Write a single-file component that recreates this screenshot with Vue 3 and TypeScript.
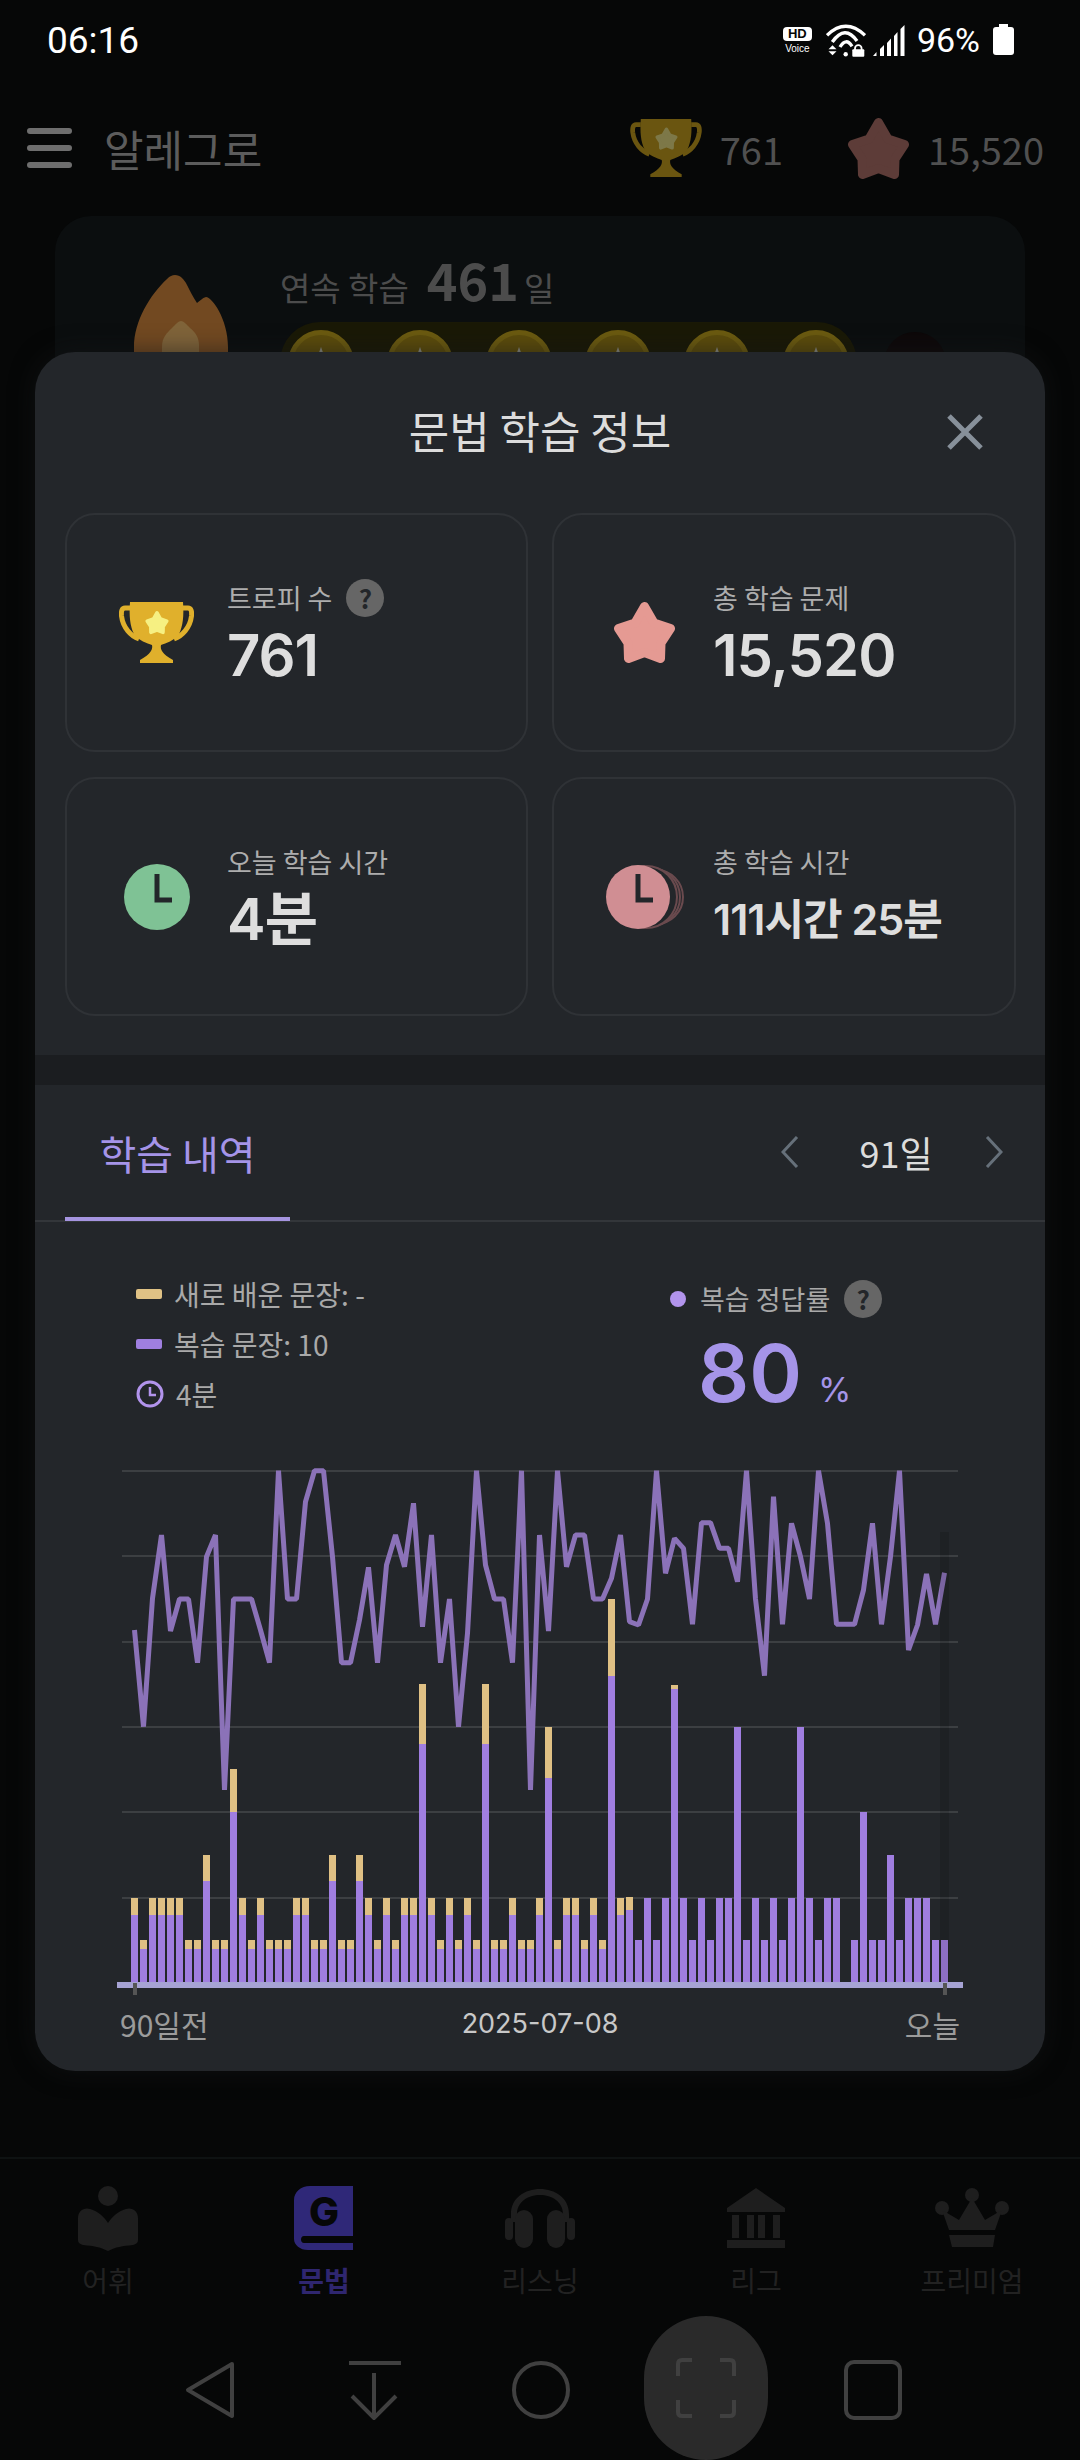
<template>
  <div class="screen">
    <div class="status">
      <span class="clock">06:16</span>
      <div class="status-right">
        <div class="hd"><b>HD</b><span>Voice</span></div>
        <svg class="wifi" width="40" height="33" viewBox="0 0 40 33" fill="none" stroke="#fff" stroke-width="3.4">
          <path d="M1 11.300Q19.700 -6.700 39 11.300" />
          <path d="M6.300 18Q19 0 31 17" />
          <path d="M14 23Q20 13 26 22.300" />
          <circle cx="19.700" cy="30.300" r="2.200" fill="#fff" stroke="none" />
          <path d="M6.500 21.300l-4 4h8zM6.500 31.300l-4-4h8z" fill="#fff" stroke="none" />
          <rect x="26.300" y="25.300" width="12" height="7.500" rx="1" fill="#fff" stroke="none" />
          <path d="M29 26v-1.500a3.300 3.300 0 0 1 6.600 0v1.500" stroke-width="1.800" />
        </svg>
        <svg class="signal" width="32" height="31" viewBox="0 0 32 31" fill="#fff">
          <path d="M0 31L3.500 27V31ZM7 24L11 20V31H7ZM14 18L18 13.500V31H14ZM21 11L24.500 7V31H21ZM27.500 4L31.500 0V31H27.500Z" />
        </svg>
        <span class="pct">96%</span>
        <div class="battery"></div>
      </div>
    </div>

    <header class="app-bar">
      <div class="burger"><i></i><i></i><i></i></div>
      <span class="app-title">알레그로</span>
      <div class="app-stats">
        <svg width="72" height="58" viewBox="0 0 75 61">
          <path :d="handles" fill="none" stroke="#6a5510" stroke-width="5" />
          <path :d="cup" fill="#6a5510" />
          <path :d="star" transform="translate(26 9) scale(.38)" fill="#7d7848" stroke="#7d7848" stroke-width="9" stroke-linejoin="round" />
        </svg>
        <span class="stat-num trophy-num">761</span>
        <svg width="63" height="61" viewBox="0 0 63 61">
          <path :d="star" fill="#5d3c38" stroke="#5d3c38" stroke-width="9" stroke-linejoin="round" />
        </svg>
        <span class="stat-num">15,520</span>
      </div>
    </header>

    <section class="streak">
      <svg class="flame" width="94" height="100" viewBox="0 0 94 100">
        <path d="M41 0C46 0 50 4 53 10C56 16 59 22 63 28C66 26 68 23 72 22C78 22 94 44 94 72V100H0V72C0 46 16 20 33 4C36 1 38 0 41 0Z" fill="#724921" />
        <path d="M47 46C50 46 53 50 56 53C61 57 65 62 65 70V100H28V72C28 62 33 58 38 53C41 50 44 46 47 46Z" fill="#80643a" />
      </svg>
      <div class="streak-body">
        <div class="streak-line"><span>연속 학습</span><b>461</b><span class="day">일</span></div>
        <div class="coin-row">
          <div class="coins">
            <div v-for="n in 6" :key="n" class="coin"><i></i></div>
          </div>
          <div class="coin-off"></div>
        </div>
      </div>
    </section>

    <nav class="tabs">
      <div class="tab">
        <svg width="60" height="66" viewBox="0 0 60 66" fill="#1e1e1e">
          <circle cx="30" cy="11" r="10" />
          <path d="M0 33C0 26 6 22 12 24C20 26 26 32 30 38C34 32 40 26 48 24C54 22 60 26 60 33V55C60 58 58 59 55 60C44 61 38 62 30 66C22 62 16 61 5 60C2 59 0 58 0 55Z" />
        </svg>
        <span>어휘</span>
      </div>
      <div class="tab active">
        <svg width="60" height="66" viewBox="0 0 60 66">
          <path d="M16 1H59V51H10C6 51 6 58 10 58H59V65H14C6 65 0 60 0 54V15C0 7 7 1 16 1Z" fill="#2f2878" />
          <text x="30" y="41" text-anchor="middle" class="g">G</text>
        </svg>
        <span>문법</span>
      </div>
      <div class="tab">
        <svg width="70" height="60" viewBox="0 0 70 60" fill="#1e1e1e">
          <path d="M6 34V26C6 10 20 1 35 1S64 10 64 26V34H58V26C58 14 47 7 35 7S12 14 12 26V34Z" />
          <rect x="10" y="22" width="18" height="38" rx="9" />
          <rect x="42" y="22" width="18" height="38" rx="9" />
          <rect x="0" y="30" width="8" height="22" rx="4" />
          <rect x="62" y="30" width="8" height="22" rx="4" />
        </svg>
        <span>리스닝</span>
      </div>
      <div class="tab">
        <svg width="58" height="60" viewBox="0 0 58 60" fill="#1e1e1e">
          <path d="M29 0L58 20V24H0V20ZM0 52H58V60H0ZM5 27H12V50H5ZM20 27H27V50H20ZM31 27H38V50H31ZM46 27H53V50H46Z" />
        </svg>
        <span>리그</span>
      </div>
      <div class="tab">
        <svg width="74" height="60" viewBox="0 0 74 60" fill="#1e1e1e">
          <circle cx="37" cy="7" r="7" /><circle cx="7" cy="20" r="7" /><circle cx="67" cy="20" r="7" />
          <path d="M37 10L50 32L67 22L60 42H14L7 22L24 32ZM14 47H60L58 59H17Z" />
        </svg>
        <span>프리미엄</span>
      </div>
    </nav>

    <div class="sys-nav">
      <svg width="52" height="60" viewBox="0 0 52 60" fill="none" class="sys-ic back">
        <path d="M48 4L4 30L48 56Z" stroke-linejoin="round" />
      </svg>
      <svg width="54" height="60" viewBox="0 0 54 60" fill="none" class="sys-ic down">
        <path d="M1 3H53M26 13V58M4 36L26 58L48 36" />
      </svg>
      <svg width="58" height="60" viewBox="0 0 58 60" fill="none" class="sys-ic circle">
        <circle cx="29" cy="30" r="27" />
      </svg>
      <div class="scan">
        <svg width="60" height="60" viewBox="0 0 60 60" fill="none" class="sys-ic">
          <path d="M2 18V6Q2 2 6 2H16M44 2H54Q58 2 58 6V18M58 42V54Q58 58 54 58H44M16 58H6Q2 58 2 54V42" />
        </svg>
      </div>
      <svg width="58" height="60" viewBox="0 0 58 60" fill="none" class="sys-ic square">
        <rect x="2" y="2" width="54" height="56" rx="8" />
      </svg>
    </div>

    <!-- bottom sheet over the dimmed page -->
    <div class="sheet">
      <div class="sheet-head">
        <h2>문법 학습 정보</h2>
        <svg class="close" width="38" height="36" viewBox="0 0 38 36">
          <path d="M3 2L35 34M35 2L3 34" stroke="#87909a" stroke-width="5" />
        </svg>
      </div>

      <div class="cards">
        <div class="card">
          <svg class="ic" width="75" height="61" viewBox="0 0 75 61">
            <path :d="handles" fill="none" stroke="#e0b02c" stroke-width="5" />
            <path :d="cup" fill="#e0b02c" />
            <path :d="star" transform="translate(26 9) scale(.38)" fill="#f6f082" stroke="#f6f082" stroke-width="9" stroke-linejoin="round" />
          </svg>
          <div class="card-text">
            <div class="card-label">트로피 수<span class="help">?</span></div>
            <div class="card-value">761</div>
          </div>
        </div>
        <div class="card">
          <svg class="ic star-ic" width="63" height="61" viewBox="0 0 63 61">
            <path :d="star" fill="#e59a93" stroke="#e59a93" stroke-width="9" stroke-linejoin="round" />
          </svg>
          <div class="card-text">
            <div class="card-label">총 학습 문제</div>
            <div class="card-value">15,520</div>
          </div>
        </div>
        <div class="card">
          <svg class="ic" width="75" height="66" viewBox="0 0 75 66">
            <circle cx="38" cy="33" r="33" fill="#7fc295" />
            <path d="M38 10V36H53" fill="none" stroke="#23262a" stroke-width="5" />
          </svg>
          <div class="card-text">
            <div class="card-label">오늘 학습 시간</div>
            <div class="card-value">4분</div>
          </div>
        </div>
        <div class="card">
          <svg class="ic star-ic clocks" width="81" height="66" viewBox="0 0 81 66">
            <g fill="#23262a" stroke="#6a4a4e" stroke-width="2">
              <circle cx="50" cy="33" r="27" />
              <circle cx="45" cy="33" r="29" />
              <circle cx="40" cy="33" r="31" />
            </g>
            <circle cx="32" cy="33" r="32" fill="#d08e93" />
            <path d="M32 10V36H47" fill="none" stroke="#23262a" stroke-width="5" />
          </svg>
          <div class="card-text">
            <div class="card-label">총 학습 시간</div>
            <div class="card-value small">111시간 25분</div>
          </div>
        </div>
      </div>

      <div class="band"></div>

      <div class="tabbar">
        <div class="tabbar-title">학습 내역</div>
        <div class="pager">
          <svg width="18" height="32" viewBox="0 0 18 32"><path d="M16 1L2 16L16 31" fill="none" stroke="#66707a" stroke-width="3" /></svg>
          <span>91일</span>
          <svg width="18" height="32" viewBox="0 0 18 32"><path d="M2 1L16 16L2 31" fill="none" stroke="#66707a" stroke-width="3" /></svg>
        </div>
      </div>

      <div class="summary">
        <div class="legend">
          <div class="legend-row"><i class="swatch new"></i>새로 배운 문장: -</div>
          <div class="legend-row"><i class="swatch review"></i>복습 문장: 10</div>
          <div class="legend-row">
            <svg width="28" height="28" viewBox="0 0 28 28" fill="none" stroke="#b294ec" stroke-width="3">
              <circle cx="14" cy="14" r="12" /><path d="M14 7V15H20" stroke-width="2.500" />
            </svg>
            4분
          </div>
        </div>
        <div class="rate">
          <div class="rate-label"><i class="dot"></i>복습 정답률<span class="help">?</span></div>
          <div class="rate-value">80<small>%</small></div>
        </div>
      </div>

      <div class="chart">
        <svg width="850" height="535" viewBox="115 1465 850 535">
          <line v-for="y in gridYs" :key="y" x1="122" x2="958" :y1="y" :y2="y" stroke="#3c3f42" stroke-width="2" />
          <template v-for="(b, i) in bars" :key="i">
            <rect :x="131 + 9 * i" :y="1982 - b[0]" width="7" :height="b[0]" fill="#a07ee0" />
            <rect v-if="b[1]" :x="131 + 9 * i" :y="1982 - b[0] - b[1]" width="7" :height="b[1]" fill="#dfc084" />
          </template>
          <polyline :points="linePoints" fill="none" stroke="#8b72b8" stroke-width="5" stroke-linejoin="bevel" />
          <rect x="940" y="1532" width="9" height="450" fill="#000" opacity=".12" />
          <rect x="117" y="1982" width="846" height="6" fill="#a6a3d4" />
          <rect x="133" y="1983" width="4" height="12" fill="#555" />
          <rect x="943" y="1983" width="4" height="12" fill="#555" />
        </svg>
        <div class="axis-labels">
          <span>90일전</span>
          <span class="mid">2025-07-08</span>
          <span class="end">오늘</span>
        </div>
      </div>
    </div>
  </div>
</template>

<script setup lang="ts">
import { computed } from 'vue';

const star = 'M31.500 4.500L41 21L57.500 26.500L48 41L47.500 56.500L31.500 50.500L15.500 56.500L15 41L5.500 26.500L22 21Z';
const cup = 'M11 0H64C65 14 64 24 60 32C55 39 47 41 42 43C41 47 43 52 54 58V61H21V58C32 52 34 47 33 43C28 41 20 39 15 32C11 24 10 14 11 0Z';
const handles = 'M11 6H6C3 6 2 9 2.500 14C4 26 12 34 20 37M64 6H69C72 6 73 9 72.500 14C71 26 63 34 55 37';

const gridYs = [1471, 1556, 1642, 1727, 1812, 1898];

// [purple, yellow] heights per day
const A = [33, 9], B = [67, 17], C = [101, 26], D = [170, 43], E = [238, 60];
const a = [42, 0], b = [84, 0];
const bars: number[][] = [
  B, A, B, B, B, B, A, A, C, A, A, D, B, A, B, A, A, A, B, B, A, A, C, A, A, C, B, A, B, A, B, B,
  E, B, A, B, A, B, A, E, A, A, B, A, A, B, [204, 51], A, B, B, A, B, A, [306, 77], B, [72, 13],
  a, b, a, b, [293, 4], b, a, b, a, b, b, [255, 0], a, b, a, b, a, b, [255, 0], b, a, b, b, [0, 0],
  a, [170, 0], a, a, [127, 0], a, b, b, b, a, a
];

// zoomed reference readings, divided by 3 below
const lineY = [
  540, 830, 445, 255, 543, 447, 447, 638, 320, 255, 1020, 447, 447, 447, 540, 638, 62, 447, 447, 155,
  62, 62, 320, 638, 638, 510, 352, 638, 345, 255, 350, 160, 530, 255, 638, 447, 830, 550, 62, 345,
  447, 447, 638, 62, 1020, 255, 543, 62, 350, 255, 255, 447, 447, 385, 255, 515, 525, 447, 62, 370,
  265, 295, 523, 218, 218, 295, 295, 395, 62, 447, 677, 140, 523, 220, 320, 447, 62, 220, 523, 523,
  523, 420, 220, 523, 320, 62, 600, 525, 372, 523, 368
];

const linePoints = computed(() =>
  lineY.map((y, i) => `${134.5 + 9 * i},${(1450 + y / 3).toFixed(1)}`).join(' ')
);
</script>

<style>
html, body {
  margin: 0;
  background: #060707;
}
</style>

<style scoped>
.screen {
  position: relative;
  width: 1080px;
  height: 2460px;
  overflow: hidden;
  background: #060707;
  font-family: "Noto Sans CJK KR", "Inter", sans-serif;
  display: flex;
  flex-direction: column;
}

.status {
  height: 80px;
  display: flex;
  justify-content: space-between;
  align-items: center;
  padding: 0 66px 0 47px;
  color: #fff;
}
.clock {
  font-family: "Roboto", sans-serif;
  font-size: 37px;
}
.status-right {
  display: flex;
  align-items: center;
}
.hd {
  width: 29px;
  display: flex;
  flex-direction: column;
  align-items: center;
  font-family: "Liberation Sans", sans-serif;
  margin-right: 14px;
}
.hd b {
  width: 100%;
  background: #fff;
  color: #060707;
  font-size: 13px;
  line-height: 14px;
  text-align: center;
  border-radius: 4px;
}
.hd span {
  font-size: 10px;
  line-height: 11px;
  margin-top: 2px;
}
.signal {
  margin-left: 7px;
}
.pct {
  font-family: "Roboto", sans-serif;
  font-size: 34px;
  margin-left: 12px;
}
.battery {
  position: relative;
  width: 21px;
  height: 28px;
  margin: 2px 0 0 13px;
  background: #fff;
  border-radius: 3px;
}
.battery::before {
  content: "";
  position: absolute;
  left: 6px;
  top: -3px;
  width: 9px;
  height: 3px;
  background: #fff;
}

.app-bar {
  height: 136px;
  display: flex;
  align-items: center;
  padding: 0 36px 0 27px;
}
.burger {
  width: 45px;
  display: flex;
  flex-direction: column;
  gap: 11px;
}
.burger i {
  height: 6px;
  background: #6e6e6e;
  border-radius: 3px;
}
.app-title {
  margin-left: 32px;
  font-size: 43px;
  color: #5c5c5c;
}
.app-stats {
  margin-left: auto;
  display: flex;
  align-items: center;
}
.stat-num {
  margin-left: 18px;
  font-size: 38px;
  color: #505050;
}
.trophy-num {
  margin-right: 64px;
}

.streak {
  margin: 0 55px;
  height: 320px;
  padding: 40px 0 0 79px;
  box-sizing: border-box;
  display: flex;
  background: #0b0e0f;
  border-radius: 36px;
}
.flame {
  margin: 19px 52px 0 0;
}
.streak-line {
  display: flex;
  align-items: baseline;
  gap: 14px;
  font-size: 33px;
  color: #4c4c4c;
  height: 46px;
  line-height: 46px;
}
.streak-line b {
  font-size: 52px;
  margin-left: 4px;
}
.streak-line .day {
  margin-left: -9px;
}
.coin-row {
  margin-top: 20px;
  display: flex;
  align-items: flex-start;
}
.coins {
  display: flex;
  gap: 33px;
  padding: 8px 8px;
  background: #1a1906;
  border-radius: 40px;
}
.coin {
  position: relative;
  box-sizing: border-box;
  width: 66px;
  height: 66px;
  border: 5px solid #6c5b10;
  border-radius: 50%;
  background: #5d4d0c;
}
.coin i {
  position: absolute;
  left: 23px;
  top: 12px;
  width: 10px;
  height: 14px;
  background: #8a8a80;
  clip-path: polygon(50% 0, 100% 100%, 0 100%);
}
.coin-off {
  margin: 10px 0 0 27px;
  width: 62px;
  height: 62px;
  border-radius: 50%;
  background: #0d0809;
}

.tabs {
  position: absolute;
  left: 0;
  right: 0;
  top: 2157px;
  height: 150px;
  border-top: 2px solid #0e1212;
  display: grid;
  grid-template-columns: repeat(5, 1fr);
}
.tab {
  display: flex;
  flex-direction: column;
  align-items: center;
  padding-top: 26px;
  font-size: 28px;
  line-height: 40px;
  color: #222;
}
.tab svg {
  height: 66px;
  margin-bottom: 9px;
}
.tab.active {
  color: #2f2670;
  font-weight: 700;
}
.g {
  font-family: "Inter", sans-serif;
  font-weight: 800;
  font-size: 40px;
  fill: #060707;
}

.sys-nav {
  position: absolute;
  left: 0;
  right: 0;
  bottom: 0;
  height: 144px;
}
.sys-nav > svg, .scan {
  position: absolute;
}
.sys-ic {
  stroke: #404040;
  stroke-width: 4;
}
.back { left: 184px; top: 44px; }
.down { left: 348px; top: 44px; }
.circle { left: 512px; top: 44px; }
.square { left: 844px; top: 44px; }
.scan {
  left: 644px;
  top: 0;
  width: 124px;
  height: 144px;
  border-radius: 62px;
  background: #2a2a2a;
  display: flex;
  align-items: center;
  justify-content: center;
}

.sheet {
  position: absolute;
  left: 35px;
  top: 352px;
  width: 1010px;
  height: 1719px;
  background: #23262a;
  border-radius: 40px;
  box-shadow: 0 0 24px rgba(20, 22, 24, 0.6);
}
.sheet-head {
  height: 161px;
  display: flex;
  align-items: center;
  justify-content: center;
  position: relative;
}
.sheet-head h2 {
  margin: 0 0 6px;
  font-size: 44px;
  font-weight: 400;
  color: #dcdcdc;
}
.close {
  position: absolute;
  right: 61px;
  top: 62px;
}

.cards {
  display: grid;
  grid-template-columns: 463px 464px;
  grid-auto-rows: 239px;
  gap: 25px 24px;
  padding: 0 30px;
}
.card {
  box-sizing: border-box;
  border: 2px solid #2f3236;
  border-radius: 30px;
  display: flex;
  align-items: center;
  padding-left: 52px;
}
.ic {
  flex: none;
  margin-right: 33px;
}
.star-ic {
  margin-left: 7px;
  margin-right: 37px;
}
.clocks {
  margin-left: 0;
  margin-right: 26px;
}
.card-label {
  display: flex;
  align-items: center;
  font-size: 27px;
  line-height: 44px;
  color: #adadad;
}
.card-value {
  font-family: "Inter", "Noto Sans CJK KR", sans-serif;
  font-size: 58px;
  line-height: 70px;
  letter-spacing: -1px;
  font-weight: 600;
  color: #dedede;
}
.card-value.small {
  font-size: 43px;
  letter-spacing: -1px;
}
.help {
  width: 38px;
  height: 38px;
  margin-left: 14px;
  border-radius: 50%;
  background: #666;
  color: #23262a;
  font-size: 26px;
  font-weight: 700;
  line-height: 38px;
  text-align: center;
}

.band {
  height: 30px;
  margin-top: 39px;
  background: #1b1d20;
}

.tabbar {
  height: 137px;
  box-sizing: border-box;
  border-bottom: 2px solid #33363a;
  display: flex;
  justify-content: space-between;
  align-items: center;
  padding: 0 42px 0 30px;
  position: relative;
}
.tabbar-title {
  box-sizing: border-box;
  width: 225px;
  height: 137px;
  line-height: 133px;
  padding-top: 3px;
  text-align: center;
  font-size: 40px;
  color: #a594e8;
  border-bottom: 4px solid #a594e0;
}
.pager {
  display: flex;
  align-items: center;
  font-size: 36px;
  color: #dcdcdc;
  margin-bottom: 2px;
}
.pager span {
  width: 186px;
  box-sizing: border-box;
  padding-left: 8px;
  text-align: center;
}

.summary {
  height: 243px;
  box-sizing: border-box;
  padding: 47px 0 0 101px;
  display: flex;
}
.legend {
  width: 534px;
}
.legend-row {
  display: flex;
  align-items: center;
  gap: 12px;
  height: 50px;
  font-size: 28px;
  color: #a9a9a9;
}
.swatch {
  width: 26px;
  height: 10px;
  border-radius: 2px;
}
.swatch.new { background: #e0c285; }
.swatch.review { background: #9f7fe0; }
.rate-label {
  display: flex;
  align-items: center;
  font-size: 27px;
  line-height: 50px;
  margin-top: 5px;
  color: #a9a9a9;
}
.dot {
  width: 16px;
  height: 16px;
  border-radius: 50%;
  background: #b294ec;
  margin-right: 14px;
}
.rate-label .help {
  margin-left: 14px;
}
.rate-value {
  margin-left: 28px;
  padding-top: 3px;
  font-family: "Inter", sans-serif;
  font-size: 80px;
  font-weight: 600;
  line-height: 92px;
  color: #a594e8;
}
.rate-value small {
  font-size: 34px;
  font-weight: 400;
  margin-left: 16px;
}

.chart {
  margin-left: 80px;
  width: 850px;
}
.chart svg {
  display: block;
}
.axis-labels {
  display: grid;
  grid-template-columns: 1fr auto 1fr;
  padding: 0 5px;
  font-size: 30px;
  line-height: 48px;
  color: #9b9b9b;
}
.axis-labels .mid {
  font-family: "Inter", sans-serif;
  font-size: 27px;
  color: #c8c8c8;
}
.axis-labels .end {
  text-align: right;
}
</style>
